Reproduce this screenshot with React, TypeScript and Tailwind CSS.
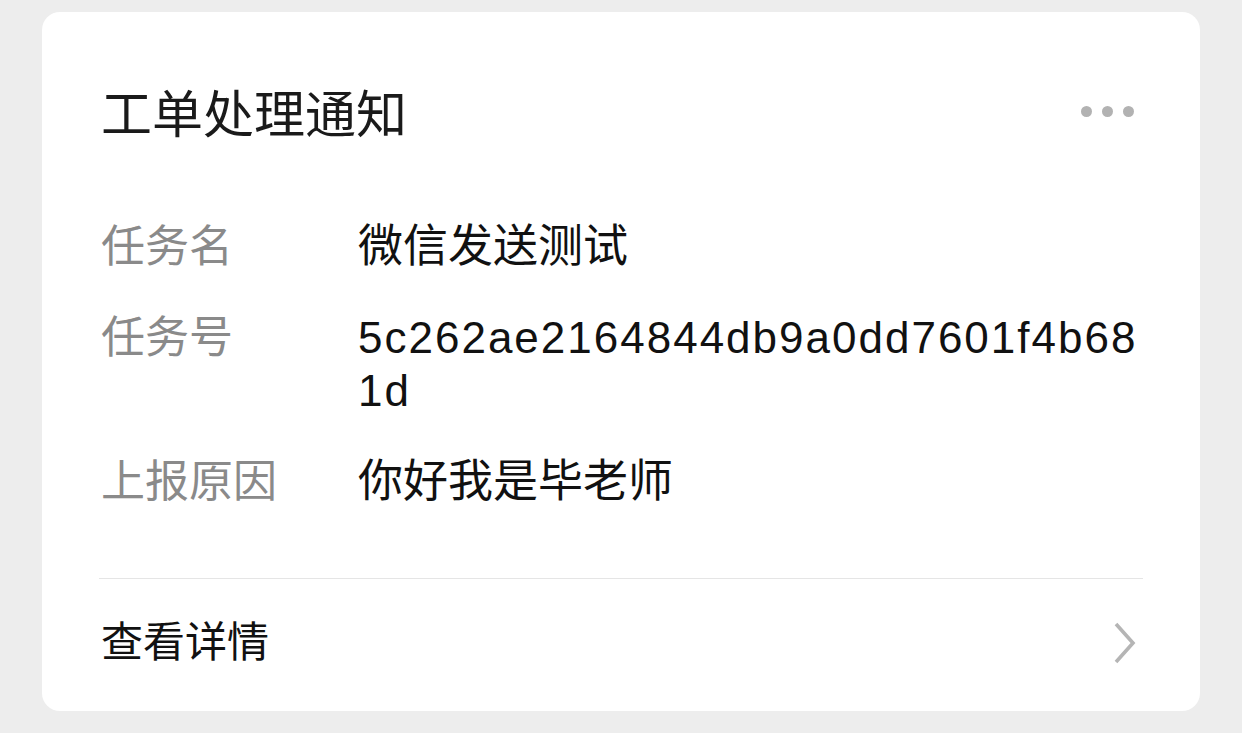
const FONT = "font-['Liberation_Sans','Noto_Sans_CJK_SC',sans-serif]";

type Field = { label: string; value: string; mono?: boolean };

const fields: Field[] = [
  { label: "任务名", value: "微信发送测试" },
  { label: "任务号", value: "5c262ae2164844db9a0dd7601f4b681d", mono: true },
  { label: "上报原因", value: "你好我是毕老师" },
];

function MoreDots() {
  return (
    <div className="flex items-center gap-[10px]">
      <span className="w-[11px] h-[11px] rounded-full bg-[#b2b2b2]" />
      <span className="w-[11px] h-[11px] rounded-full bg-[#b2b2b2]" />
      <span className="w-[11px] h-[11px] rounded-full bg-[#b2b2b2]" />
    </div>
  );
}

function Chevron() {
  return (
    <svg width="28" height="44" viewBox="0 0 28 44" fill="none">
      <polyline
        points="5,3 22,22 5,41"
        stroke="#b5b5b5"
        strokeWidth="3.6"
        strokeLinecap="butt"
        strokeLinejoin="miter"
      />
    </svg>
  );
}

export default function App() {
  return (
    <div className={`w-[1242px] h-[733px] bg-[#ededed] px-[42px] pt-[12px] ${FONT}`}>
      <div className="bg-white rounded-[18px] px-[57px] h-[699px] flex flex-col">
        {/* Header */}
        <div className="pt-[74px] flex items-center justify-between h-[134px]">
          <h1 className="text-[51px] leading-[60px] text-[#1a1a1a] pl-[2px]">工单处理通知</h1>
          <div className="pr-[9px] -mt-[10px]">
            <MoreDots />
          </div>
        </div>

        {/* Fields */}
        <div className="mt-[74px] flex flex-col gap-[38px]">
          {fields.map((f) => (
            <div key={f.label} className="flex items-start leading-[53px]">
              <div className="w-[259px] shrink-0 text-[44px] text-[#8a8a8a] pl-[2px]">{f.label}</div>
              <div
                className={`flex-1 min-w-0 text-[#111111] ${
                  f.mono ? "text-[44px] break-all tracking-[2px]" : "text-[45px]"
                }`}
              >
                {f.value}
              </div>
            </div>
          ))}
        </div>

        {/* Divider + footer */}
        <div className="mt-[70px] border-t border-[#e5e5e5]" />
        <div className="h-[131px] flex items-center justify-between pb-[4px]">
          <span className="text-[42px] text-[#111111] pl-[2px]">查看详情</span>
          <div className="pr-[4px]">
            <Chevron />
          </div>
        </div>
      </div>
    </div>
  );
}
